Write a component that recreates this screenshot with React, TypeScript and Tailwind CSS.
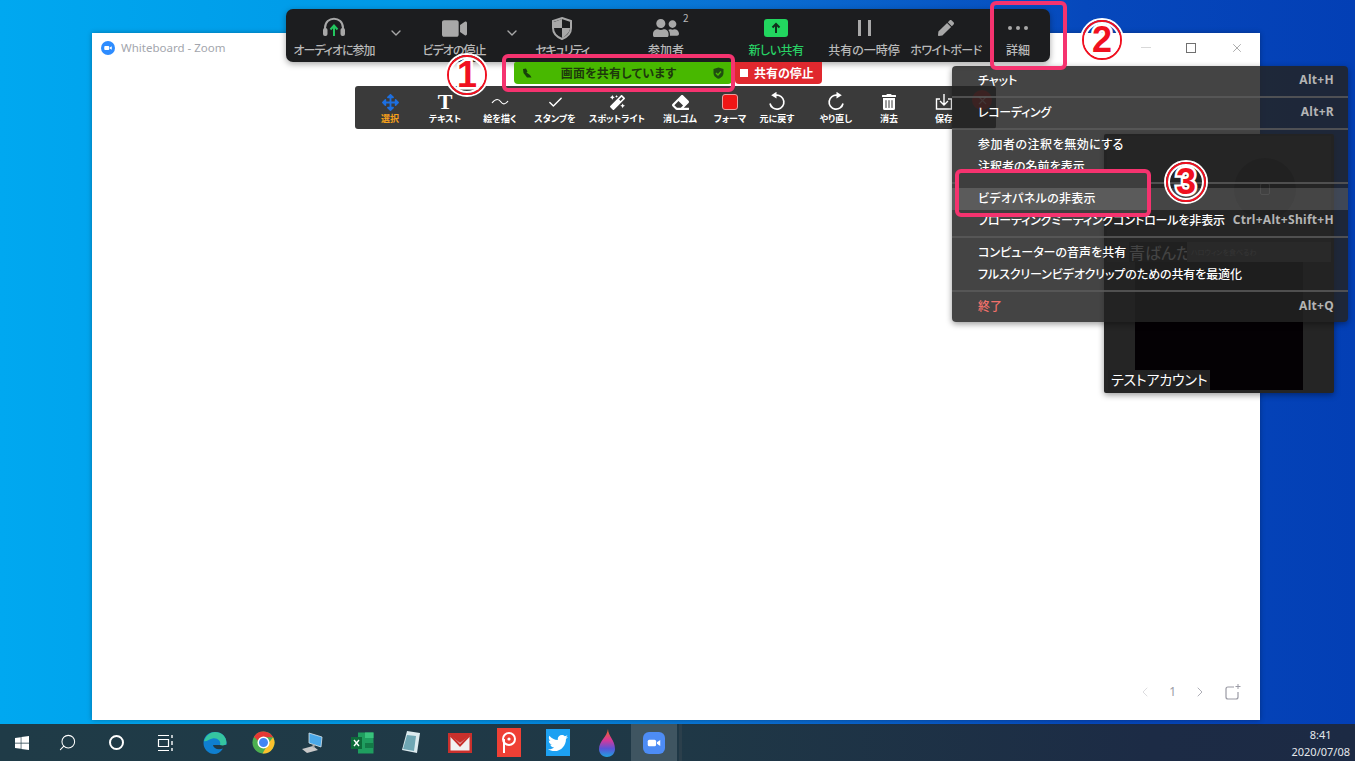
import { ReactNode } from 'react';
import { FaArrowsAlt, FaEraser, FaMagic, FaPen, FaTrashAlt, FaTwitter, FaUserFriends, FaVideo, FaWindows } from 'react-icons/fa';
import { Check, ChevronDown, ChevronLeft, ChevronRight, Search, X } from 'lucide-react';

const jp = "font-['Noto_Sans_CJK_JP','Noto_Sans',sans-serif] [font-feature-settings:'palt']";

const ZoomGlyph = ({ size }: { size: number }) => (
  <svg width={size} height={size} viewBox="0 0 24 24">
    <rect x="4.5" y="8" width="10" height="8" rx="1.8" fill="white" />
    <path d="M15.5 11 L19.5 8.3 V15.7 L15.5 13 Z" fill="white" />
  </svg>
);

const UndoArrow = ({ className }: { className?: string }) => (
  <svg width="20" height="20" viewBox="0 0 20 20" className={className}>
    <path d="M9 3.2 A7 7 0 1 1 3 11.5" fill="none" stroke="white" stroke-width="1.7" />
    <path d="M9.5 -0.2 V6.6 L4.2 3.2 Z" fill="white" />
  </svg>
);

const ToolButton = ({
  icon,
  label,
  className,
  labelClass = 'text-[#b9b9b9]',
}: {
  icon: ReactNode;
  label: string;
  className: string;
  labelClass?: string;
}) => (
  <div className={`flex flex-col items-center ${className}`}>
    <div className="flex h-[26px] items-center justify-center">{icon}</div>
    <span className={`mt-[1px] whitespace-nowrap text-[12px] leading-[16px] font-medium ${labelClass}`}>{label}</span>
  </div>
);

const MainToolbar = () => (
  <div className={`absolute left-[286px] top-[9px] flex h-[53px] w-[764px] rounded-[7px] bg-[#1c1d1f] pt-[6px] shadow-[0_2px_6px_rgba(0,0,0,0.35)] ${jp}`}>
    <ToolButton
      className="w-[96px]"
      label="オーディオに参加"
      labelClass="text-[#b9b9b9] tracking-[-1px]"
      icon={
        <svg width="26" height="24" viewBox="0 0 26 24">
          <path d="M4 17 V12 C4 -0.5 22 -0.5 22 12 V17" fill="none" stroke="#a8a8a8" stroke-width="2" />
          <rect x="2" y="12" width="4.5" height="8" rx="2" fill="#a8a8a8" />
          <rect x="19.5" y="12" width="4.5" height="8" rx="2" fill="#a8a8a8" />
          <path d="M13 20 V10 M9.5 13.5 L13 9.5 L16.5 13.5" fill="none" stroke="#22c55e" stroke-width="2" />
        </svg>
      }
    />
    <div className="flex w-[28px] items-start justify-center pt-[10px]">
      <ChevronDown size={16} className="text-[#a8a8a8]" />
    </div>
    <ToolButton className="w-[88px]" label="ビデオの停止" labelClass="text-[#b9b9b9] tracking-[-1px]" icon={<FaVideo size={25} className="text-[#a8a8a8]" />} />
    <div className="flex w-[28px] items-start justify-center pt-[10px]">
      <ChevronDown size={16} className="text-[#a8a8a8]" />
    </div>
    <ToolButton
      className="w-[72px]"
      label="セキュリティ"
      labelClass="text-[#b9b9b9] tracking-[-1.5px]"
      icon={
        <svg width="22" height="24" viewBox="0 0 22 24">
          <path d="M11 2 L20 5 V12 C20 17 16 21 11 23 C6 21 2 17 2 12 V5 Z" fill="none" stroke="#a8a8a8" stroke-width="2" />
          <path d="M11 3 V12 H3 V6 Z M11 12 H19 C19 16 15 20 11 22 Z" fill="#a8a8a8" />
        </svg>
      }
    />
    <ToolButton
      className="w-[136px]"
      label="参加者"
      icon={
        <div className="relative">
          <FaUserFriends size={26} className="text-[#a8a8a8]" />
          <span className="absolute left-[30px] top-[-4px] text-[10px] leading-[14px] text-[#b9b9b9]">2</span>
        </div>
      }
    />
    <ToolButton
      className="w-[84px]"
      label="新しい共有"
      labelClass="text-[#28cf64] tracking-[-0.5px]"
      icon={
        <div className="flex h-[18px] w-[24px] items-center justify-center rounded-[3px] bg-[#22d65f]">
          <svg width="12" height="12" viewBox="0 0 12 12">
            <path d="M6 11 V2 M2.5 5.5 L6 2 L9.5 5.5" fill="none" stroke="#10301c" stroke-width="2" />
          </svg>
        </div>
      }
    />
    <ToolButton
      className="w-[92px]"
      label="共有の一時停"
      icon={
        <div className="flex gap-[7px]">
          <div className="h-[16px] w-[3px] bg-[#a8a8a8]" />
          <div className="h-[16px] w-[3px] bg-[#a8a8a8]" />
        </div>
      }
    />
    <ToolButton className="w-[72px]" label="ホワイトボード" labelClass="text-[#b9b9b9] tracking-[-0.5px]" icon={<FaPen size={16} className="text-[#a8a8a8]" />} />
    <ToolButton
      className="w-[68px] pl-[4px]"
      label="詳細"
      icon={
        <div className="flex gap-[4px]">
          <div className="h-[4px] w-[4px] rounded-full bg-[#a8a8a8]" />
          <div className="h-[4px] w-[4px] rounded-full bg-[#a8a8a8]" />
          <div className="h-[4px] w-[4px] rounded-full bg-[#a8a8a8]" />
        </div>
      }
    />
  </div>
);

const ShareBar = () => (
  <div className={`absolute left-[514px] top-[62px] flex h-[22px] ${jp}`}>
    <div className="flex w-[218px] items-center justify-between rounded-b-[4px] rounded-tl-[2px] bg-[#48b800] px-[8px]">
      <svg width="10" height="10" viewBox="0 0 10 10">
        <path d="M1 1 L4 0.5 L5.5 3.5 L4.5 4.5 L8 7 L9.5 9.5 H5 L1.5 5 Z" fill="#17400a" />
      </svg>
      <span className="mr-[8px] text-[12px] font-bold tracking-[0.2px] text-[#1d3a0c]">画面を共有しています</span>
      <svg width="11" height="12" viewBox="0 0 11 12">
        <path d="M5.5 0.5 L10.5 2 V6 C10.5 9 8 10.8 5.5 11.8 C3 10.8 0.5 9 0.5 6 V2 Z" fill="#1f4d10" />
        <path d="M3 6 L5 8 L8 4.5" fill="none" stroke="#48b800" stroke-width="1.4" />
      </svg>
    </div>
    <div className="ml-[3px] flex w-[87px] items-center gap-[6px] rounded-b-[4px] bg-[#e0282e] pl-[5px]">
      <div className="h-[8px] w-[8px] bg-white" />
      <span className="text-[12px] font-bold text-white">共有の停止</span>
    </div>
  </div>
);

const BoardButton = ({ icon, label, className, labelClass = 'text-white' }: { icon: ReactNode; label: string; className: string; labelClass?: string }) => (
  <div className={`flex flex-col items-center ${className}`}>
    <div className="flex h-[22px] items-center justify-center">{icon}</div>
    <span className={`whitespace-nowrap text-[9px] leading-[12px] font-bold ${labelClass}`}>{label}</span>
  </div>
);

const BoardToolbar = () => (
  <div className={`absolute left-[355px] top-[86px] flex h-[43px] w-[641px] rounded-[3px] bg-[#3a3a3a] pt-[5px] ${jp}`}>
    <BoardButton className="w-[70px]" label="選択" labelClass="text-[#f7a11a]" icon={<FaArrowsAlt size={17} className="text-[#1d6fe0]" />} />
    <BoardButton className="w-[40px]" label="テキスト" icon={<span className="font-['Liberation_Serif',serif] text-[22px] leading-[22px] font-bold text-white">T</span>} />
    <BoardButton
      className="w-[70px]"
      label="絵を描く"
      icon={
        <svg width="18" height="8" viewBox="0 0 18 8">
          <path d="M1 5 C5 0 8 1 10 4 C12 7 15 6 17 3" fill="none" stroke="white" stroke-width="1.2" />
        </svg>
      }
    />
    <BoardButton className="w-[40px]" label="スタンプを" icon={<Check size={17} className="text-white" />} />
    <BoardButton className="w-[84px]" label="スポットライト" icon={<FaMagic size={15} className="text-white" />} />
    <BoardButton className="w-[42px]" label="消しゴム" icon={<FaEraser size={17} className="text-white" />} />
    <BoardButton className="w-[58px]" label="フォーマ" icon={<div className="h-[16px] w-[16px] rounded-[3px] border border-[#e8a0a0] bg-[#f01616]" />} />
    <BoardButton className="w-[36px]" label="元に戻す" icon={<UndoArrow />} />
    <BoardButton className="w-[82px]" label="やり直し" icon={<UndoArrow className="-scale-x-100" />} />
    <BoardButton className="w-[24px]" label="消去" icon={<FaTrashAlt size={16} className="text-white" />} />
    <BoardButton
      className="w-[86px]"
      label="保存"
      icon={
        <svg width="18" height="18" viewBox="0 0 18 18">
          <path d="M5 6 H1.5 V16 H16.5 V6 H13 M9 1 V12 M5 8 L9 12 L13 8" fill="none" stroke="white" stroke-width="1.4" />
        </svg>
      }
    />
    <div className="absolute left-[617px] top-[4px] flex h-[20px] w-[20px] items-center justify-center rounded-full bg-[#c02020]">
      <X size={13} className="text-[#f0a0a0]" />
    </div>
  </div>
);

const VideoPanel = () => (
  <div className={`absolute left-[1104px] top-[134px] flex h-[259px] w-[230px] flex-col rounded-[2px] bg-[#252525] px-[3px] pt-[2px] shadow-[0_2px_6px_rgba(0,0,0,0.4)] ${jp}`}>
    <div className="flex h-[106px] items-center justify-end bg-[#333333] pr-[35px]">
      <div className="flex h-[62px] w-[62px] items-center justify-center rounded-full bg-[#1a1a1a]">
        <div className="h-[12px] w-[10px] rounded-[2px] border border-[#888888]" />
      </div>
    </div>
    <div className="flex h-[20px] bg-[#333333]">
      <span className="ml-[22px] w-[58px] bg-[#111111] text-[16px] leading-[20px] whitespace-nowrap text-white">青ばんだ</span>
      <div className="flex-1 bg-[#4a4a4a] pl-[4px] text-[7px] leading-[20px] text-[#999999]">ハロウィンを食べるわ</div>
    </div>
    <div className="relative mx-[28px] mb-[3px] flex-1 bg-[#040104]" />
    <span className="absolute bottom-[3px] left-[4px] bg-[#222222] px-[3px] pb-[2px] text-[14px] leading-[18px] tracking-[-0.2px] text-white">テストアカウント</span>
  </div>
);

const MenuItem = ({ label, shortcut, labelClass = 'text-white' }: { label?: string; shortcut?: string; labelClass?: string }) => (
  <div className="flex h-[22px] items-center justify-between pb-[2px] pl-[26px] pr-[14px]">
    <span className={`whitespace-nowrap text-[12px] font-medium ${labelClass}`}>{label}</span>
    {shortcut && <span className="font-['Noto_Sans',sans-serif] text-[12px] font-bold tracking-[0.3px] text-[#b4b4b4]">{shortcut}</span>}
  </div>
);

const Separator = () => <div className="h-[2px] bg-[#5b5b5b]/80" />;

const MoreMenu = () => (
  <div className={`absolute left-[952px] top-[66px] w-[396px] rounded-[4px] bg-[#232323]/85 shadow-[0_2px_6px_rgba(0,0,0,0.4)] ${jp}`}>
    <div className="py-[4px]">
      <MenuItem label="チャット" shortcut="Alt+H" />
    </div>
    <Separator />
    <div className="py-[4px]">
      <MenuItem label="レコーディング" labelClass="text-white tracking-[-0.3px]" shortcut="Alt+R" />
    </div>
    <Separator />
    <div className="py-[4px]">
      <MenuItem label="参加者の注釈を無効にする" labelClass="text-white tracking-[0.5px]" />
      <MenuItem label="注釈者の名前を表示" />
    </div>
    <Separator />
    <div className="py-[4px]">
      <div className="bg-white/15">
        <MenuItem />
      </div>
      <MenuItem label="フローティングミーティングコントロールを非表示" labelClass="text-white tracking-[-0.15px]" shortcut="Ctrl+Alt+Shift+H" />
    </div>
    <Separator />
    <div className="py-[4px]">
      <MenuItem label="コンピューターの音声を共有" />
      <MenuItem label="フルスクリーンビデオクリップのための共有を最適化" labelClass="text-white tracking-[-0.1px]" />
    </div>
    <Separator />
    <div className="py-[4px]">
      <MenuItem label="終了" labelClass="text-[#f0706a]" shortcut="Alt+Q" />
    </div>
  </div>
);

const Callout = ({ n, className }: { n: string; className: string }) => (
  <div className={`absolute flex h-[44px] w-[44px] items-center justify-center rounded-full border-2 border-white ${className}`}>
    <div className="flex h-full w-full items-center justify-center rounded-full border-2 border-[#f01020]">
      <div className="flex h-full w-full items-center justify-center rounded-full border-2 border-white">
        <span className="font-['Liberation_Sans',sans-serif] text-[36px] leading-none font-bold text-[#f01020] [-webkit-text-stroke:5px_white] [paint-order:stroke_fill]">{n}</span>
      </div>
    </div>
  </div>
);

const Annotations = () => (
  <>
    <div className="absolute left-[502px] top-[54px] h-[38px] w-[233px] rounded-[6px] border-[4px] border-[#f5336f]" />
    <div className="absolute left-[990px] top-[1px] h-[69px] w-[77px] rounded-[6px] border-[4px] border-[#f5336f]" />
    <div className={`absolute left-[955px] top-[169px] h-[48px] w-[196px] rounded-[6px] border-[4px] border-[#f5336f] bg-[#3e3e3e] pt-[15px] ${jp}`}>
      <div className="flex h-[22px] items-center bg-[#5b5b5b] pb-[2px] pl-[19px] text-[12px] font-medium tracking-[0.3px] text-white">ビデオパネルの非表示</div>
    </div>
    <Callout n="1" className="left-[445px] top-[53px]" />
    <Callout n="2" className="left-[1080px] top-[18px]" />
    <Callout n="3" className="left-[1164px] top-[160px]" />
  </>
);

const WhiteboardWindow = () => (
  <div className="absolute left-[92px] top-[33px] flex h-[687px] w-[1168px] flex-col bg-white shadow-[0_0_5px_rgba(0,0,0,0.3)]">
    <div className="flex h-[29px] items-center pl-[9px]">
      <div className="flex h-[14px] w-[14px] items-center justify-center rounded-full bg-[#2d8cff]">
        <ZoomGlyph size={12} />
      </div>
      <span className="ml-[6px] font-['Noto_Sans',sans-serif] text-[11.5px] text-[#a3a6ad]">Whiteboard - Zoom</span>
      <div className="ml-auto flex items-center pr-[16px]">
        <div className="h-px w-[10px] bg-[#d8d8d8]" />
        <div className="ml-[35px] h-[10px] w-[10px] border border-[#707070]" />
        <X size={14} strokeWidth={1} className="ml-[34px] text-[#707070]" />
      </div>
    </div>
    <div className="mt-auto flex items-center justify-end pb-[19px] pr-[18px] text-[#9a9aa4]">
      <ChevronLeft size={16} strokeWidth={1.2} className="text-[#d4d4d8]" />
      <span className="ml-[16px] font-['Noto_Sans',sans-serif] text-[12px]">1</span>
      <ChevronRight size={16} strokeWidth={1.2} className="ml-[16px]" />
      <svg width="18" height="18" viewBox="0 0 18 18" className="ml-[16px]">
        <path d="M10 4 H4 C2.5 4 2 4.8 2 6 V14 C2 15.4 2.8 16 4 16 H12 C13.4 16 14 15.2 14 14 V9" fill="none" stroke="#9a9aa4" stroke-width="1.2" />
        <path d="M14 1 V6 M11.5 3.5 H16.5" stroke="#9a9aa4" stroke-width="1" />
      </svg>
    </div>
  </div>
);

const TaskCell = ({ children }: { children: ReactNode }) => (
  <div className="flex h-full w-[49px] items-center justify-center">{children}</div>
);

const Taskbar = () => (
  <div className="flex h-[37px] items-center bg-[linear-gradient(90deg,#1f3b47_0%,#1f3846_50%,#1c2b45_85%,#1c2a44_100%)]">
    <div className="flex h-full w-[43px] items-center justify-center">
      <FaWindows size={16} className="text-white" />
    </div>
    <TaskCell>
      <Search size={19} strokeWidth={1.3} className="-scale-x-100 text-white" />
    </TaskCell>
    <TaskCell>
      <div className="h-[15px] w-[15px] rounded-full border-2 border-white" />
    </TaskCell>
    <TaskCell>
      <svg width="18" height="18" viewBox="0 0 18 18">
        <path d="M1 1.5 H12 M1 16.5 H12 M1.5 5.5 H11.5 V12.5 H1.5 Z" fill="none" stroke="white" stroke-width="1.2" />
        <path d="M15 1 V4 M15 7 V11 M15 14 V17" stroke="white" stroke-width="1.4" />
      </svg>
    </TaskCell>
    <TaskCell>
      <svg width="24" height="24" viewBox="0 0 24 24">
        <path d="M12 1 C18.5 1 23.5 5.5 23.5 12 V14 H10 C10.5 17.5 15 19.5 20 17.5 C17.5 21.5 14.5 23 11.5 23 C5 23 0.5 18 0.5 12 C0.5 5.5 5.5 1 12 1 Z" fill="#0f7fd0" />
        <path d="M1 10 C3 4 8 1 12 1 C18.5 1 23.5 5.5 23.5 12 C23.5 14 20 15 17 14 C18.5 10 14 6.5 9.5 7.5 C5.5 8.5 3 11 1 10 Z" fill="#35c5a0" />
      </svg>
    </TaskCell>
    <TaskCell>
      <svg width="23" height="23" viewBox="0 0 24 24">
        <circle cx="12" cy="12" r="11.5" fill="#4caf50" />
        <path d="M12 0.5 A11.5 11.5 0 0 1 22 6.5 L12 6.5 L6 10 L2 6 A11.5 11.5 0 0 1 12 0.5 Z" fill="#e53935" />
        <path d="M22 6.5 A11.5 11.5 0 0 1 11 23.5 L17 13 Z" fill="#fbc02d" />
        <circle cx="12" cy="12" r="5.5" fill="#4285f4" stroke="white" stroke-width="1.6" />
      </svg>
    </TaskCell>
    <TaskCell>
      <svg width="24" height="24" viewBox="0 0 24 24">
        <path d="M8 2 L21 6 L20 16 L8 12 Z" fill="#4aa8e8" stroke="#d8e4ea" stroke-width="0.8" />
        <path d="M1 18 L12 15 L17 19 L6 22 Z" fill="#c8c8c8" />
        <path d="M12 13 L14 14 L13 17 L11 16 Z" fill="#a8a8a8" />
      </svg>
    </TaskCell>
    <TaskCell>
      <svg width="24" height="24" viewBox="0 0 24 24">
        <path d="M8 1.5 H23.5 V22.5 H8 Z" fill="#1f9e5f" />
        <path d="M15 1.5 H23.5 V7 H15 Z" fill="#38c27c" />
        <path d="M15 12 H23.5 V17 H15 Z" fill="#137a47" />
        <rect x="1" y="6" width="11" height="12" fill="#0d6b3a" />
        <path d="M4 9 L9 15 M9 9 L4 15" stroke="white" stroke-width="1.4" />
      </svg>
    </TaskCell>
    <TaskCell>
      <svg width="22" height="26" viewBox="0 0 22 26">
        <path d="M7 1 L20 3 L17 23 L2 20 Z" fill="#dcebef" />
        <path d="M7 5 L16 6 L14 21 L3 19 Z" fill="#6fa7b4" />
      </svg>
    </TaskCell>
    <TaskCell>
      <svg width="24" height="20" viewBox="0 0 24 20">
        <rect width="24" height="20" fill="#c9302c" />
        <path d="M2.5 2.5 L12 10 L21.5 2.5 V17.5 H2.5 Z" fill="#f1f1f1" />
        <path d="M2.5 2.5 L12 12.5 L21.5 2.5" fill="none" stroke="#c9302c" stroke-width="2" />
      </svg>
    </TaskCell>
    <TaskCell>
      <svg width="24" height="29" viewBox="0 0 24 29">
        <rect width="24" height="29" fill="#ef4035" />
        <circle cx="12" cy="11" r="6" fill="none" stroke="white" stroke-width="2" />
        <circle cx="12" cy="11" r="1.6" fill="white" />
        <path d="M7 11 V25" stroke="white" stroke-width="2" />
      </svg>
    </TaskCell>
    <TaskCell>
      <div className="flex h-[27px] w-[24px] items-center justify-center bg-[#1da1f2]">
        <FaTwitter size={20} className="text-white" />
      </div>
    </TaskCell>
    <TaskCell>
      <svg width="20" height="30" viewBox="0 0 20 30">
        <defs>
          <linearGradient id="drop" x1="0" y1="0" x2="0" y2="1">
            <stop offset="0" stopColor="#f06a1f" />
            <stop offset="0.4" stopColor="#d6399a" />
            <stop offset="0.7" stopColor="#5a54d8" />
            <stop offset="1" stopColor="#1fa2e0" />
          </linearGradient>
        </defs>
        <path d="M11 1 C11 8 18 12 18 21 C18 26 14 29 10 29 C5 29 2 25 2 21 C2 13 10 9 11 1 Z" fill="url(#drop)" />
      </svg>
    </TaskCell>
    <div className="flex h-full w-[46px] items-center justify-center bg-[#3f5561]">
      <div className="flex h-[22px] w-[22px] items-center justify-center rounded-[6px] bg-[#4d8cf5]">
        <ZoomGlyph size={20} />
      </div>
    </div>
    <div className="ml-[2px] h-full w-[3px] bg-[#2b3f4b]" />
    <div className="ml-auto flex flex-col items-center pr-[5px] font-['Noto_Sans',sans-serif] text-[11px] leading-[17px] text-[#e4e8ec]">
      <span>8:41</span>
      <span>2020/07/08</span>
    </div>
  </div>
);

export default function App() {
  return (
    <div className="relative flex h-[761px] w-[1355px] flex-col overflow-hidden bg-[linear-gradient(90deg,#00a8f0_0%,#0098e6_30%,#0a6fd2_55%,#0648bc_80%,#033fb5_100%)]">
      <div className="flex-1" />
      <Taskbar />
      <WhiteboardWindow />
      <BoardToolbar />
      <VideoPanel />
      <MoreMenu />
      <MainToolbar />
      <ShareBar />
      <Annotations />
    </div>
  );
}
